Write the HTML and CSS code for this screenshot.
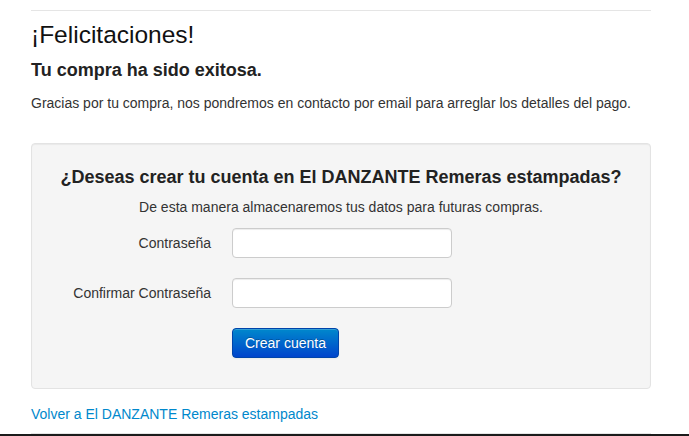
FILE: index.html
```html
<!DOCTYPE html>
<html lang="es">
<head>
    <meta charset="UTF-8">
    <meta name="viewport" content="width=device-width, initial-scale=1.0">
    <title>Compra exitosa</title>
    <link rel="stylesheet" href="styles.css">
</head>
<body>
    <div class="container">
        <hr class="divider">
        <h3 class="title">¡Felicitaciones!</h3>
        <h4 class="subtitle">Tu compra ha sido exitosa.</h4>
        <p class="message">Gracias por tu compra, nos pondremos en contacto por email para arreglar los detalles del pago.</p>

        <div class="well">
            <h4 class="well-title">¿Deseas crear tu cuenta en El DANZANTE Remeras estampadas?</h4>
            <p class="well-text">De esta manera almacenaremos tus datos para futuras compras.</p>
            <form class="form-horizontal" onsubmit="return false;">
                <div class="control-group">
                    <label class="control-label" for="password">Contraseña</label>
                    <div class="controls"><input type="password" id="password"></div>
                </div>
                <div class="control-group">
                    <label class="control-label" for="password2">Confirmar Contraseña</label>
                    <div class="controls"><input type="password" id="password2"></div>
                </div>
                <div class="control-group last">
                    <div class="controls"><button class="btn-primary" type="submit">Crear cuenta</button></div>
                </div>
            </form>
        </div>

        <a class="back-link" href="#">Volver a El DANZANTE Remeras estampadas</a>
        <hr class="divider bottom">
    </div>
    <div class="footer"></div>
</body>
</html>
```

FILE: styles.css
```css
body {
    margin: 0;
    background-color: #fff;
    color: #333;
    font-family: "Liberation Sans", Arial, sans-serif;
    font-size: 14px;
    line-height: 20px;
    overflow: hidden;
}
.container {
    width: 620px;
    margin-left: 31px;
    padding-top: 10px;
}
.divider {
    margin: 0;
    height: 0;
    border: none;
    border-top: 1px solid #e5e5e5;
}
.divider.bottom {
    margin-top: 9px;
}
.title {
    margin: 4px 0 0;
    font-size: 24.5px;
    line-height: 40px;
    font-weight: normal;
    color: #111;
}
.subtitle {
    margin: 5px 0 0;
    font-size: 18px;
    line-height: 20px;
    font-weight: bold;
    color: #222;
}
.message {
    margin: 13px 0 0;
}
.well {
    margin-top: 30px;
    padding: 19px;
    background-color: #f5f5f5;
    border: 1px solid #e3e3e3;
    border-radius: 4px;
    box-shadow: inset 0 1px 1px rgba(0, 0, 0, 0.05);
}
.well-title {
    margin: 4px 0 0;
    font-size: 18px;
    line-height: 20px;
    font-weight: bold;
    text-align: center;
    color: #222;
}
.well-text {
    margin: 10px 0 0;
    text-align: center;
}
.form-horizontal {
    margin-top: 11px;
}
.control-group {
    display: grid;
    grid-template-columns: 160px 1fr;
    column-gap: 21px;
    margin-bottom: 20px;
}
.control-group.last {
    margin-bottom: 11px;
}
.control-label {
    padding-top: 5px;
    text-align: right;
}
.controls {
    grid-column: 2;
}
.controls input {
    display: block;
    box-sizing: border-box;
    width: 220px;
    height: 30px;
    margin: 0;
    padding: 4px 6px;
    background-color: #fff;
    border: 1px solid #ccc;
    border-radius: 4px;
    box-shadow: inset 0 1px 1px rgba(0, 0, 0, 0.075);
    font-family: inherit;
    font-size: 14px;
}
.btn-primary {
    display: block;
    height: 30px;
    padding: 4px 12px;
    margin: 0;
    color: #fff;
    font-family: inherit;
    font-size: 14px;
    line-height: 20px;
    text-shadow: 0 -1px 0 rgba(0, 0, 0, 0.25);
    background-color: #006dcc;
    background-image: linear-gradient(to bottom, #0088cc, #0044cc);
    border: 1px solid #0044aa;
    border-radius: 4px;
    box-shadow: inset 0 1px 0 rgba(255, 255, 255, 0.2), 0 1px 2px rgba(0, 0, 0, 0.05);
    cursor: pointer;
}
.back-link {
    display: block;
    margin-top: 15px;
    color: #0088cc;
    text-decoration: none;
}
.footer {
    height: 10px;
    background-color: #1b1b1b;
}
```
